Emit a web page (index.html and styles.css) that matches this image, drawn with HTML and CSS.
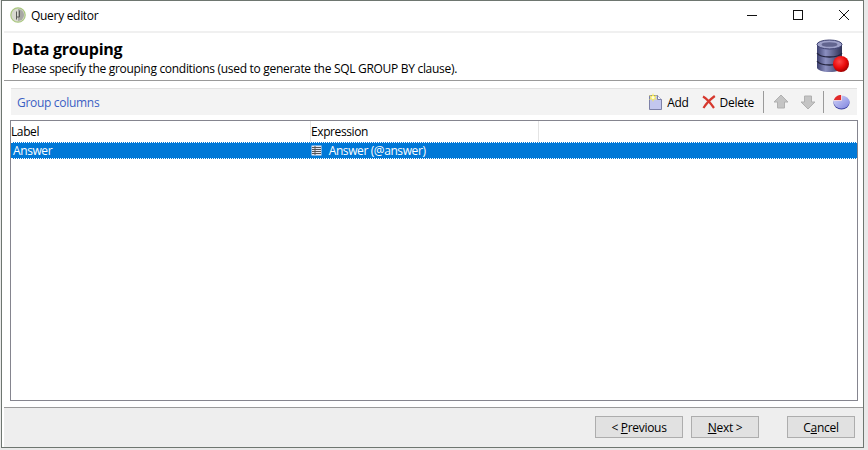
FILE: index.html
```html
<!DOCTYPE html>
<html lang="en">
<head>
    <meta charset="UTF-8">
    <title>Query editor</title>
    <link rel="stylesheet" href="styles.css">
</head>
<body>
    <div class="window">
        <div class="titlebar">
            <svg class="app-icon" width="16" height="16" viewBox="0 0 16 16">
                <circle cx="8" cy="8" r="7.200" fill="#d8d8d0" stroke="#a9c77e" stroke-width="1.200"/>
                <path d="M8 2a6 6 0 0 1 0 12z" fill="#a8a8a4"/>
                <path d="M6.500 4.500v8M9.500 3.500v6.500H6.500" fill="none" stroke="#5b5b58" stroke-width="1"/>
            </svg>
            <span class="title-text">Query editor</span>
            <div class="win-buttons">
                <svg width="12" height="12" viewBox="0 0 12 12"><path d="M1 6.500h10" stroke="#111" fill="none"/></svg>
                <svg width="12" height="12" viewBox="0 0 12 12"><rect x="1.500" y="1.500" width="9" height="9" stroke="#111" fill="none"/></svg>
                <svg width="12" height="12" viewBox="0 0 12 12"><path d="M1 1l10 10M11 1L1 11" stroke="#111" fill="none"/></svg>
            </div>
        </div>

        <div class="header">
            <div class="header-text">
                <h1>Data grouping</h1>
                <p>Please specify the grouping conditions (used to generate the SQL GROUP BY clause).</p>
            </div>
            <svg class="db-icon" width="34" height="34" viewBox="0 0 34 34">
                <defs>
                    <linearGradient id="dbBody" x1="0" x2="1" y1="0" y2="0">
                        <stop offset="0" stop-color="#3d4170"/>
                        <stop offset="0.35" stop-color="#8b8fc0"/>
                        <stop offset="1" stop-color="#2f3155"/>
                    </linearGradient>
                    <radialGradient id="redBall" cx="0.4" cy="0.35" r="0.7">
                        <stop offset="0" stop-color="#ff4a4a"/>
                        <stop offset="0.6" stop-color="#e80808"/>
                        <stop offset="1" stop-color="#960000"/>
                    </radialGradient>
                    <linearGradient id="pieBody" x1="0" x2="1" y1="0" y2="1">
                        <stop offset="0" stop-color="#d5d7f8"/>
                        <stop offset="1" stop-color="#7f84e0"/>
                    </linearGradient>
                </defs>
                <path d="M1 5.500v23c0 2.500 5.500 4.500 12.500 4.500s12.500-2 12.500-4.500v-23z" fill="url(#dbBody)"/>
                <ellipse cx="13.500" cy="5.500" rx="12.500" ry="4.500" fill="#9da0c8" stroke="#3d4170"/>
                <ellipse cx="13.500" cy="5.500" rx="8" ry="2.300" fill="#62658f"/>
                <path d="M1 14c2 3 7 4 12.500 4s10.500-1 12.500-4M1 22c2 3 7 4 12.500 4s10.500-1 12.500-4" fill="none" stroke="#24253f" stroke-width="1.300"/>
                <circle cx="25" cy="25" r="8" fill="url(#redBall)"/>
            </svg>
        </div>

        <div class="body">
            <div class="toolbar">
                <span class="toolbar-title">Group columns</span>
                <div class="tools">
                    <button class="tool">
                        <svg width="15" height="18" viewBox="0 0 15 18">
                            <path d="M1.500 2.500h8l4 4v10h-12z" fill="#c3c7ee" stroke="#7d81a8"/>
                            <path d="M9.500 2.500v4h4" fill="#f4f4ff" stroke="#7d81a8"/>
                            <path d="M5 0l1 3 3-1-2 2.500 2 2.500-3-1-1 3-1-3-3 1 2-2.500-2-2.500 3 1z" fill="#fff04a"/>
                            <circle cx="5" cy="4.500" r="1.500" fill="#fffde0"/>
                        </svg>
                        Add
                    </button>
                    <button class="tool">
                        <svg width="14" height="14" viewBox="0 0 14 14">
                            <path d="M1 1.500c4.500 2.500 7.500 6.500 11 11.500M12.800 1c-4 3-8.300 7-11.300 12" fill="none" stroke="#d6382e" stroke-width="2.200"/>
                        </svg>
                        Delete
                    </button>
                    <span class="separator"></span>
                    <svg class="arrow" width="16" height="16" viewBox="0 0 16 16"><path d="M8 1l7 7h-3.500v6h-7V8H1z" fill="#c4c4c4" stroke="#b0b0b0"/></svg>
                    <svg class="arrow" width="16" height="16" viewBox="0 0 16 16"><path d="M8 15l7-7h-3.500V2h-7v6H1z" fill="#c4c4c4" stroke="#b0b0b0"/></svg>
                    <span class="separator"></span>
                    <svg class="pie" width="17" height="16" viewBox="0 0 17 16">
                        <ellipse cx="8.500" cy="9" rx="8" ry="6.500" fill="#3f43a0"/>
                        <ellipse cx="8.500" cy="8" rx="8" ry="6.500" fill="url(#pieBody)"/>
                        <path d="M8.500 6.500L0.800 6.500C1.500 3 4.500 1 8.500 1z" fill="#e22b2b"/>
                        <path d="M8.500 1v5.500H0.800" fill="none" stroke="#fff" stroke-width="0.700"/>
                    </svg>
                </div>
            </div>

            <div class="grid">
                <div class="grid-head">
                    <div class="col col-label">Label</div>
                    <div class="col col-expr">Expression</div>
                    <div class="col col-rest"></div>
                </div>
                <div class="grid-row selected">
                    <div class="col col-label"><span class="cell-pad">Answer</span></div>
                    <div class="col col-expr">
                        <svg class="field-icon" width="11" height="11" viewBox="0 0 11 11">
                            <rect x="0.500" y="0.500" width="10" height="10" fill="#e6e6f2"/>
                            <path d="M1 2.500h9M1 4.500h9M1 6.500h9M1 8.500h9M4 1v9" stroke="#555" fill="none"/>
                        </svg>
                        Answer (@answer)
                    </div>
                </div>
            </div>
        </div>

        <div class="footer">
            <button class="btn btn-prev">&lt; <u>P</u>revious</button>
            <button class="btn btn-next"><u>N</u>ext &gt;</button>
            <button class="btn btn-cancel">C<u>a</u>ncel</button>
        </div>
    </div>
</body>
</html>
```

FILE: styles.css
```css
html, body {
    margin: 0;
    padding: 0;
    height: 450px;
    overflow: hidden;
    background-color: #e9e9e9;
}

body {
    font-family: "Open Sans", "Noto Sans", sans-serif;
    font-size: 12px;
    letter-spacing: -0.3px;
    color: #000;
}

.window {
    box-sizing: border-box;
    width: 863px;
    height: 448px;
    margin-left: 1px;
    border: 1px solid #6e7670;
    background-color: #fff;
    display: flex;
    flex-direction: column;
}

/* Title bar */
.titlebar {
    box-sizing: border-box;
    height: 30px;
    display: flex;
    align-items: center;
    padding: 0 0 2px 8px;
    flex-shrink: 0;
}

.app-icon {
    margin-right: 5px;
}

.win-buttons {
    margin-left: auto;
    display: flex;
    gap: 34px;
    padding-right: 13px;
}

/* Header */
.header {
    box-sizing: border-box;
    height: 50px;
    margin-left: 2px;
    border-top: 2px solid #f0f0f0;
    border-bottom: 1px solid #9a9a9a;
    display: flex;
    justify-content: space-between;
    flex-shrink: 0;
}

.header-text {
    padding: 7px 0 0 8px;
}

.header h1 {
    margin: 0;
    font-size: 16px;
    line-height: 19px;
    font-weight: bold;
    letter-spacing: -0.25px;
}

.header p {
    margin: 0;
    font-size: 12px;
    line-height: 19px;
}

.db-icon {
    margin: 6px 13px 0 0;
}

/* Main area */
.body {
    flex: 1;
    margin-left: 2px;
    padding: 7px 5px 6px 6px;
    display: flex;
    flex-direction: column;
    min-height: 0;
}

.toolbar {
    box-sizing: border-box;
    height: 27px;
    margin: 0 1px 0 1px;
    background-color: #f3f3f3;
    border-top: 1px solid #e2e2e2;
    display: flex;
    align-items: center;
    justify-content: space-between;
    flex-shrink: 0;
}

.toolbar-title {
    color: #3b5fc4;
    padding-left: 6px;
}

.tools {
    display: flex;
    align-items: center;
}

.tool {
    background: none;
    border: 0;
    padding: 0;
    font: inherit;
    letter-spacing: inherit;
    display: flex;
    align-items: center;
    gap: 4px;
    margin-right: 13px;
}

.tool + .separator {
    margin-left: -4px;
}

.separator {
    width: 1px;
    height: 22px;
    background-color: #9a9a9a;
}

.arrow {
    margin-left: 9px;
}

.arrow + .arrow {
    margin-left: 11px;
}

.arrow + .separator {
    margin-left: 7px;
}

.pie {
    margin: 0 7px 0 9px;
}

.grid {
    flex: 1;
    margin-top: 5px;
    border: 1px solid #85858f;
    background-color: #fff;
    letter-spacing: -0.4px;
}

.grid-head {
    display: flex;
    height: 21px;
    line-height: 21px;
}

.col {
    box-sizing: border-box;
    height: 100%;
}

.col-label {
    width: 300px;
    border-right: 1px solid #e4e4e4;
}

.col-expr {
    width: 228px;
    border-right: 1px solid #e4e4e4;
}

.grid-row {
    display: flex;
    height: 17px;
    line-height: 15px;
}

.grid-row .col {
    border-right: 0;
}

.selected {
    box-sizing: border-box;
    background-color: #0078d7;
    color: #fff;
    border-top: 1px dotted #fff;
    border-bottom: 1px dotted #fff;
}

.cell-pad {
    padding-left: 2px;
}

.field-icon {
    margin: 0 4px 0 0;
    vertical-align: -1px;
}

/* Footer */
.footer {
    box-sizing: border-box;
    height: 40px;
    margin-left: 2px;
    border-top: 1px solid #9a9a9a;
    background-color: #eeeeee;
    display: flex;
    align-items: flex-start;
    padding-top: 8px;
    flex-shrink: 0;
}

.btn {
    box-sizing: border-box;
    height: 22px;
    border: 1px solid #adadad;
    background-color: #e1e1e1;
    font: inherit;
    letter-spacing: inherit;
    padding: 0;
}

.btn-prev {
    width: 88px;
    margin-left: 591px;
}

.btn-next {
    width: 68px;
    margin-left: 8px;
}

.btn-cancel {
    width: 68px;
    margin-left: 28px;
}
```
